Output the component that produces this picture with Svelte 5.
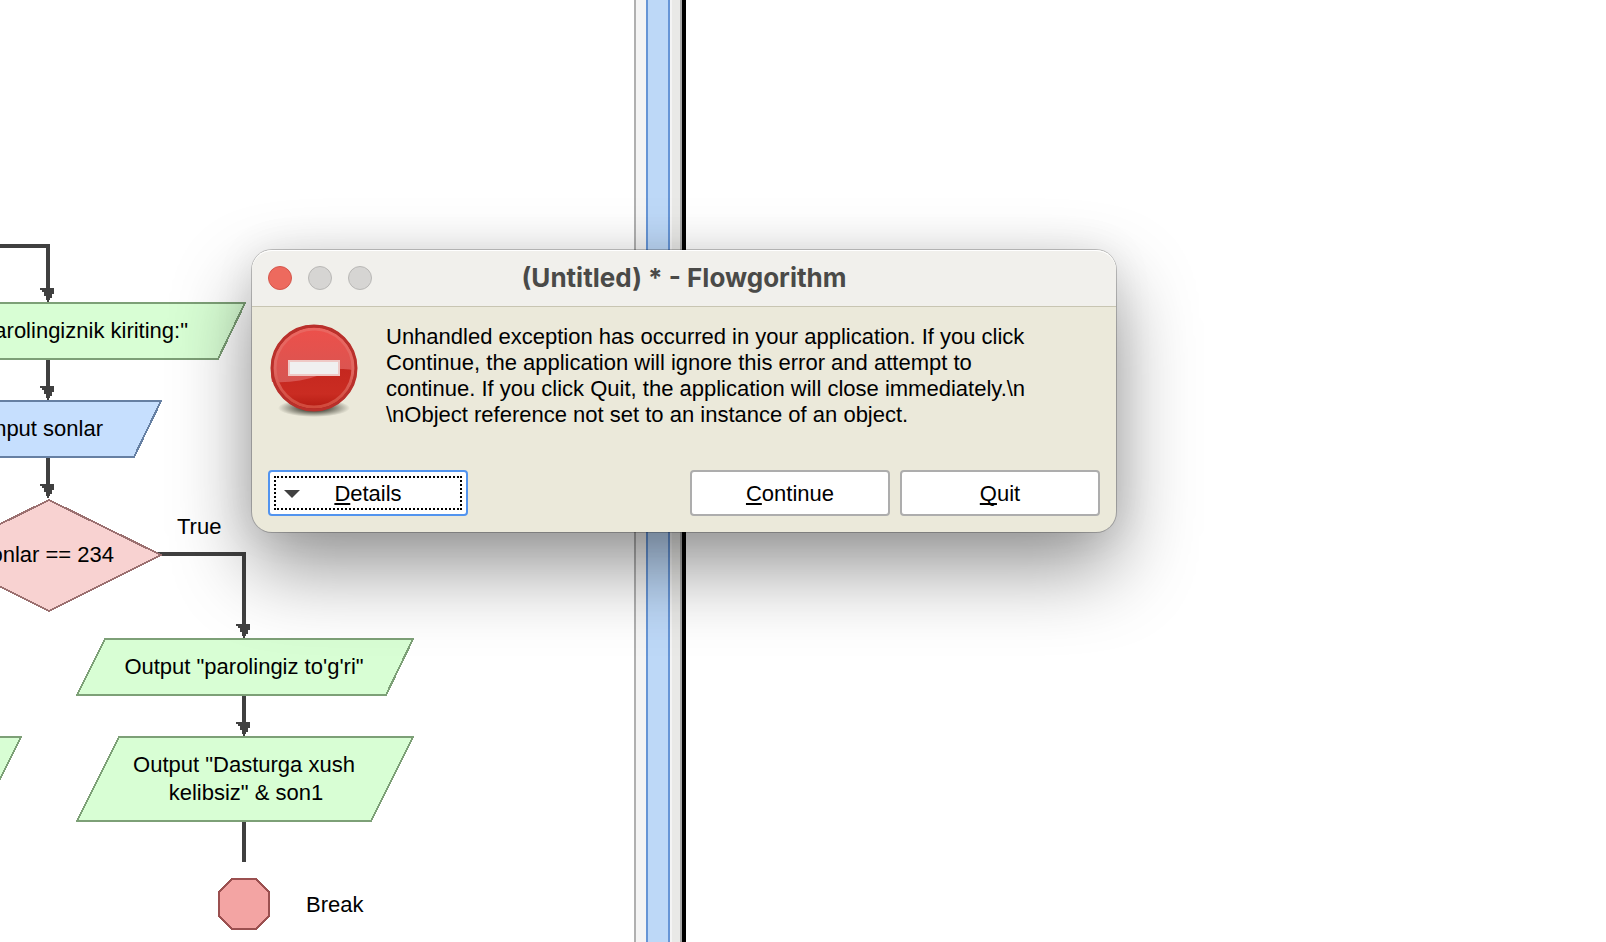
<script>
  const arrows = [
    { x: 48, y: 288 },
    { x: 48, y: 386 },
    { x: 48, y: 484 },
    { x: 244, y: 624 },
    { x: 244, y: 722 }
  ];
  const links = [
    'M0 246H48V290',
    'M48 360V388',
    'M48 458V486',
    'M158 554H244V626',
    'M244 696V724',
    'M244 822V862'
  ];
</script>

<main>
  <section class="chart" aria-label="Flowchart">
    <svg width="634" height="942">
      <g class="links">
        {#each links as d}<path {d} />{/each}
      </g>
      <g class="arrows">
        {#each arrows as a}
          <path d="M{a.x - 8} {a.y}h14v6h-2v4h-2v2h-1v2h-2v-2h-1v-4h-2v-4h-2v-2h-2z" />
        {/each}
      </g>
      <g class="output">
        <path d="M-120 303H245L218 359H-148Z" />
        <path d="M105 639H413L386 695H77Z" />
        <path d="M119 737H413L371 821H77Z" />
        <path d="M-270 737H21L-21 821H-312Z" />
      </g>
      <path class="input" d="M-36 401H161L134 457H-64Z" />
      <path class="decision" d="M49 500L161 555L49 611L-63 555Z" />
      <path class="stop" d="M232 879H256L269 892V916L256 929H232L219 916V892Z" />
      <g class="labels">
        <text x="188" y="338" text-anchor="end">Output "parolingiznik kiriting:"</text>
        <text x="103" y="436" text-anchor="end">Input sonlar</text>
        <text x="114" y="562" text-anchor="end">sonlar == 234</text>
        <text x="177" y="534">True</text>
        <text x="244" y="674" text-anchor="middle">Output "parolingiz to'g'ri"</text>
        <text x="244" y="772" text-anchor="middle">Output "Dasturga xush</text>
        <text x="246" y="800" text-anchor="middle">kelibsiz" &amp; son1</text>
        <text x="306" y="912">Break</text>
      </g>
    </svg>
  </section>
  <div class="scroll"><div class="thumb"></div></div>
  <section class="side"></section>

  <div class="dialog" role="alertdialog" aria-labelledby="title" aria-describedby="message">
    <header>
      <div class="lights">
        <button class="light close" aria-label="Close"></button>
        <button class="light" aria-label="Minimize" disabled></button>
        <button class="light" aria-label="Zoom" disabled></button>
      </div>
      <h1 id="title">(Untitled) * - Flowgorithm</h1>
    </header>
    <div class="content">
      <svg class="icon" width="92" height="96" viewBox="0 0 92 96" aria-hidden="true">
        <defs>
          <linearGradient id="top" x1="0" y1="0" x2="0" y2="1">
            <stop offset="0" stop-color="#ec504b" />
            <stop offset="1" stop-color="#d65652" />
          </linearGradient>
          <linearGradient id="low" x1="0" y1="0" x2="0" y2="1">
            <stop offset="0.5" stop-color="#c5271f" />
            <stop offset="0.8" stop-color="#ca2c22" />
            <stop offset="1" stop-color="#b0180f" />
          </linearGradient>
          <linearGradient id="rim" x1="0" y1="0" x2="0" y2="1">
            <stop offset="0" stop-color="#ea6660" />
            <stop offset="0.5" stop-color="#e06862" />
            <stop offset="1" stop-color="#d04a3c" />
          </linearGradient>
          <radialGradient id="shade">
            <stop offset="0.4" stop-color="#3c3c30" stop-opacity="0.8" />
            <stop offset="1" stop-color="#3c3c30" stop-opacity="0" />
          </radialGradient>
        </defs>
        <ellipse cx="46" cy="86" rx="36" ry="9" fill="url(#shade)" />
        <circle cx="46" cy="46" r="43" fill="url(#low)" />
        <path d="M4 60A43 43 0 1 1 89 49C74 45 66 47 52 53C36 59 20 61 4 60Z" fill="url(#top)" />
        <circle cx="46" cy="46" r="39" fill="none" stroke="url(#rim)" stroke-width="3" />
        <circle cx="46" cy="46" r="42" fill="none" stroke="#b9302b" stroke-width="3" />
        <path d="M21 39H71V53H21Z" fill="#f0f0f0" stroke="#efc9c6" stroke-width="2" />
      </svg>
      <p id="message">
        Unhandled exception has occurred in your application. If you click<br />
        Continue, the application will ignore this error and attempt to<br />
        continue. If you click Quit, the application will close immediately.\n<br />
        \nObject reference not set to an instance of an object.
      </p>
    </div>
    <footer>
      <button class="action details"><span class="caret"></span><span><u>D</u>etails</span></button>
      <button class="action"><span><u>C</u>ontinue</span></button>
      <button class="action"><span><u>Q</u>uit</span></button>
    </footer>
  </div>
</main>

<style>
  :global(body) { margin: 0; overflow: hidden; background: #fff; }
  main {
    position: relative;
    display: grid;
    grid-template-columns: 634fr 52px 920fr;
    height: 100vh;
    overflow: hidden;
    font-family: "Liberation Sans", Arial, sans-serif;
    color: #000;
  }
  .chart { overflow: hidden; min-width: 0; }
  .chart svg { display: block; }
  .links path { fill: none; stroke: #404040; stroke-width: 4; shape-rendering: crispEdges; }
  .arrows path { fill: #404040; shape-rendering: crispEdges; }
  .output path, .input, .decision, .stop { stroke-width: 2; shape-rendering: crispEdges; }
  .output path { fill: #d8fed4; stroke: #7da077; }
  .input { fill: #c6dffe; stroke: #6680a3; }
  .decision { fill: #f8d2d1; stroke: #9b7070; }
  .stop { fill: #f3a4a3; stroke: #9b5050; }
  .labels { font-size: 22px; fill: #000; }
  .scroll {
    display: flex;
    box-sizing: border-box;
    padding: 0 10px;
    background: linear-gradient(90deg, #f4f4f4 36px, #e9e9e7 36px);
    border-left: 2px solid #b0b0b0;
    border-right: 4px solid #000;
    box-shadow: inset -2px 0 #a8a8a8;
  }
  .scroll .thumb {
    flex: 1;
    margin-right: 2px;
    background: #bdd8f7;
    border: solid #6695d6;
    border-width: 0 2px;
  }
  .side { background: #fff; }
  .dialog {
    position: absolute;
    left: 252px;
    top: 250px;
    width: 864px;
    border-radius: 20px;
    background: #ebe9da;
    box-shadow: 0 0 0 1px rgba(0, 0, 0, 0.22), 0 36px 80px rgba(0, 0, 0, 0.42), 0 0 40px rgba(0, 0, 0, 0.08);
  }
  header {
    position: relative;
    display: flex;
    align-items: center;
    justify-content: center;
    height: 56px;
    background: #f1f0ec;
    border-bottom: 1px solid #c8c5b2;
    border-radius: 20px 20px 0 0;
    box-shadow: inset 0 1px #fff;
  }
  .lights { position: absolute; left: 16px; display: flex; gap: 16px; }
  .light {
    width: 24px;
    height: 24px;
    padding: 0;
    border: 1px solid #b9b8b6;
    border-radius: 50%;
    background: #d6d5d3;
  }
  .close { background: #ed6a5e; border-color: #d5564b; }
  h1 {
    margin: 0;
    font: 700 26px/32px Inter, sans-serif;
    color: #4a4a48;
  }
  .content { display: flex; gap: 26px; padding: 15px 16px 0; }
  .icon { flex: none; }
  p { margin: 0; padding-top: 2px; font-size: 22px; line-height: 26px; white-space: nowrap; }
  footer { display: flex; gap: 10px; padding: 42px 16px 16px; }
  .action {
    position: relative;
    box-sizing: border-box;
    width: 200px;
    height: 46px;
    padding: 2px 0 0;
    border: 2px solid #adadad;
    border-radius: 4px;
    background: #fff;
    color: #000;
    font: 22px/26px "Liberation Sans", Arial, sans-serif;
  }
  .action u { text-decoration-thickness: 2px; text-underline-offset: 2px; text-decoration-skip-ink: none; }
  .details { margin-right: auto; border-color: #5294ef; }
  .details::after { content: ""; position: absolute; inset: 4px; border: 2px dotted #000; }
  .caret {
    position: absolute;
    left: 14px;
    top: 18px;
    border: solid transparent;
    border-width: 8px 8px 0;
    border-top-color: #404040;
  }
</style>
